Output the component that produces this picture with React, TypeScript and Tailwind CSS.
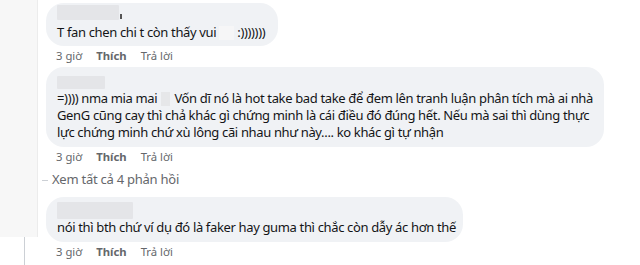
import React from "react";

const font = { fontFamily: '"Noto Sans", "Open Sans", Arial, sans-serif' };

function Actions() {
  return (
    <div className="flex items-center gap-[14px] pl-[10px] h-[14px] text-[11.3px] leading-[14px] text-[#65676b]">
      <span>3 giờ</span>
      <span className="font-bold">Thích</span>
      <span>Trả lời</span>
    </div>
  );
}

// blurred name placeholder
function NameBlur({ w, h }: { w: number; h: number }) {
  return (
    <div
      className="bg-[#e4e5e8] blur-[0.6px] rounded-[1px]"
      style={{ width: w, height: h }}
    />
  );
}

export default function App() {
  return (
    <div
      className="w-[640px] h-[265px] bg-white flex overflow-hidden text-[#141517]"
      style={font}
    >
      {/* left rail */}
      <div className="w-[46px] shrink-0 flex flex-col">
        <div className="w-[38px] h-[237px] bg-[#f7f7f7] border-r border-[#ececec]" />
        <div className="ml-[24px] w-px flex-1 bg-[#ccd0d5]" />
      </div>

      <div className="flex-1 flex flex-col pt-[3px]">
        {/* comment 1 */}
        <div className="w-[232px] bg-[#f0f2f5] rounded-[18px] pt-[2px] pb-[5px] px-[11px]">
          <div className="flex items-end gap-[1px] h-[15px] mb-[4px]">
            <NameBlur w={62} h={15} />
            <div className="w-[2px] h-[5px] bg-[#555] mb-[1px]" />
          </div>
          <div className="text-[13px] tracking-[-0.35px] leading-[17px] whitespace-nowrap flex items-center">
            <span>T fan chen chi t còn thấy vui</span>
            <span className="inline-block w-[15px] h-[14px] mx-[3px] bg-[#f6f6f7]" />
            <span>:)))))))</span>
          </div>
        </div>
        <div className="mt-[3px] mb-[4px]">
          <Actions />
        </div>

        {/* comment 2 */}
        <div className="w-[558px] bg-[#f0f2f5] rounded-[18px] pt-[9px] pb-[6px] px-[11px]">
          <div className="h-[13px] mb-[1px]">
            <NameBlur w={48} h={13} />
          </div>
          <div className="text-[13px] tracking-[-0.35px] leading-[17px] whitespace-nowrap">
            <div className="flex items-center">
              <span>=)))) nma mia mai</span>
              <span className="inline-block w-[14px] h-[14px] mx-[4px] bg-[#e6e7e9] blur-[0.5px]" />
              <span>Vốn dĩ nó là hot take bad take để đem lên tranh luận phân tích mà ai nhà</span>
            </div>
            <div>GenG cũng cay thì chả khác gì chứng minh là cái điều đó đúng hết. Nếu mà sai thì dùng thực</div>
            <div>lực chứng minh chứ xù lông cãi nhau như này.... ko khác gì tự nhận</div>
          </div>
        </div>
        <div className="mt-[3px]">
          <Actions />
        </div>

        {/* view replies */}
        <div className="flex items-center h-[18px] mt-[7px] text-[13px] tracking-[-0.25px] text-[#65676b]">
          <div className="-ml-[4px] w-[6px] h-px bg-[#ccd0d5] mr-[4px]" />
          <span>Xem tất cả 4 phản hồi</span>
        </div>

        {/* comment 3 */}
        <div className="mt-[8px] w-[417px] bg-[#f0f2f5] rounded-[18px] pt-[5px] pb-[6px] px-[11px]">
          <div className="h-[17px]">
            <NameBlur w={76} h={17} />
          </div>
          <div className="text-[13px] tracking-[-0.35px] leading-[17px] whitespace-nowrap">
            nói thì bth chứ ví dụ đó là faker hay guma thì chắc còn dẫy ác hơn thế
          </div>
        </div>
        <div className="mt-[3px]">
          <Actions />
        </div>
      </div>
    </div>
  );
}
